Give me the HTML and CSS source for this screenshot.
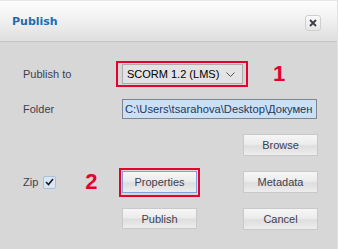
FILE: index.html
```html
<!DOCTYPE html>
<html>
   <head>
      <meta name="viewport" content="width=device-width, initial-scale=1">
      <link rel="stylesheet" href="styles.css">
   </head>
   <body>
      <div class="dialog">

         <!--
         Title bar
         -->
         <div class="titlebar">
            <span class="title">Publish</span>
            <button class="close" type="button">
               <svg width="8" height="8" viewBox="0 0 8 8">
                  <path d="M1,1 L7,7 M7,1 L1,7" />
               </svg>
            </button>
         </div>

         <!--
         Form
         -->
         <div class="form">
            <span class="label">Publish to</span>
            <div class="combo marked">
               <span>SCORM 1.2 (LMS)</span>
               <svg width="9" height="5" viewBox="0 0 9 5">
                  <path d="M0.5,0.5 L4.5,4.5 L8.5,0.5" />
               </svg>
            </div>
            <span class="step step-one">1</span>

            <span class="label">Folder</span>
            <div class="path">C:\Users\tsarahova\Desktop\Докумен</div>

            <button class="btn browse" type="button">Browse</button>

            <div class="zip">
               <span class="label">Zip</span>
               <span class="check">
                  <svg width="9" height="8" viewBox="0 0 9 8">
                     <path d="M1,4 L3.5,6.5 L8,1" />
                  </svg>
               </span>
               <span class="step step-two">2</span>
            </div>
            <button class="btn focused marked" type="button">Properties</button>
            <button class="btn" type="button">Metadata</button>

            <button class="btn publish" type="button">Publish</button>
            <button class="btn" type="button">Cancel</button>
         </div>

      </div>
   </body>
</html>
```

FILE: styles.css
```css
body {
   margin : 0;
   background-color : #ffffff;
   font-family : "Liberation Sans", Arial, sans-serif;
}

.dialog {
   width : 337px;
   height : 248px;
   border-top : 1px solid #e6e6e6;
   border-right : 1px solid #e2e2e2;
   background-color : #d7d7d7;
}

.titlebar {
   height : 40px;
   display : flex;
   align-items : center;
   justify-content : space-between;
   padding : 0 16px 0 12px;
   border-bottom : 1px solid #c3c3c3;
   background : linear-gradient(#fdfdfd, #f3f3f3 40%, #dfdfdf);
}

.title {
   font-family : "DejaVu Sans", Verdana, sans-serif;
   font-weight : bold;
   font-size : 11px;
   color : #1a6cb8;
   margin-top : 1px;
}

.close {
   width : 16px;
   height : 16px;
   padding : 0;
   margin-top : 3px;
   display : flex;
   align-items : center;
   justify-content : center;
   border : 1px solid #cfcfcf;
   border-radius : 3px;
   background : linear-gradient(#fbfbfb, #e6e6e6);
}

.close path {
   stroke : #3a3f47;
   stroke-width : 1.8px;
   fill : none;
}

.form {
   display : grid;
   grid-template-columns : 99px 121px 74px;
   grid-template-rows : 20px 20px 22px 22px 22px;
   row-gap : 15px;
   padding : 22px 0 0 23px;
}

.label {
   align-self : center;
   font-size : 11px;
   color : #3e3e50;
}

.combo {
   position : relative;
   display : flex;
   align-items : center;
   justify-content : space-between;
   padding : 0 7px 0 4px;
   border : 1px solid #acacac;
   background-color : #e3e3e3;
   font-size : 11px;
   color : #000000;
}

.combo path {
   stroke : #555555;
   stroke-width : 1px;
   fill : none;
}

.marked::after {
   content : "";
   position : absolute;
   top : -4px;
   right : -6px;
   bottom : -4px;
   left : -7px;
   border : 2px solid #e6002e;
}

.step {
   align-self : center;
   font-weight : bold;
   font-size : 22px;
   color : #e6002e;
}

.step-one {
   padding-left : 30px;
}

.path {
   grid-column : 2 / 4;
   overflow : hidden;
   white-space : nowrap;
   padding : 0 0 0 2px;
   line-height : 18px;
   border : 1px solid #7d8590;
   background-color : #cbdff5;
   font-size : 11.2px;
   color : #23395a;
}

.browse {
   grid-column : 3;
}

.zip {
   display : flex;
   align-items : center;
}

.check {
   width : 11px;
   height : 11px;
   margin-left : 5px;
   display : flex;
   align-items : center;
   justify-content : center;
   border : 1px solid #a8bfd8;
   border-radius : 2px;
   background-color : #d9e6f4;
}

.check path {
   stroke : #1a1a1a;
   stroke-width : 1.6px;
   fill : none;
}

.step-two {
   margin-left : 29px;
}

.btn {
   position : relative;
   width : 75px;
   padding : 0;
   border : 1px solid #c9c9c9;
   background : linear-gradient(#f6f6f6, #ececec 45%, #dedede 55%, #ededed);
   font-family : "Liberation Sans", Arial, sans-serif;
   font-size : 11px;
   color : #3e3e50;
}

.btn.marked::after {
   top : -4px;
   right : -4px;
   bottom : -5px;
   left : -4px;
}

.focused {
   border-color : #7ea4dc;
}

.form .btn:nth-child(n) {
   justify-self : start;
}

.publish {
   grid-column : 2;
   height : 21px;
}
```
